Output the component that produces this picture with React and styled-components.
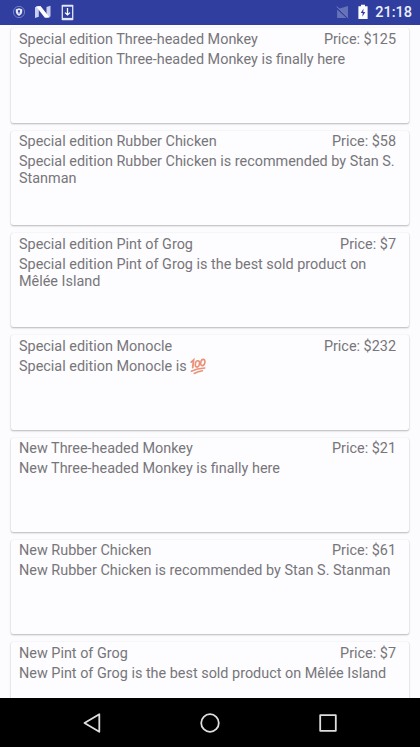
import React from "react";
import styled, { createGlobalStyle } from "styled-components";

const GlobalStyle = createGlobalStyle`
  body { margin: 0; background: #fcfbfe; }
  * { box-sizing: border-box; }
`;

const Screen = styled.main`
  display: flex;
  flex-direction: column;
  width: 420px;
  height: 747px;
  overflow: hidden;
  background: #fcfbfe;
  font-family: Roboto, sans-serif;
  color: #777679;
`;

const StatusBar = styled.header`
  display: flex;
  flex: none;
  align-items: center;
  justify-content: space-between;
  height: 24.5px;
  padding: 0 8px 0 12px;
  background: #303f9f;
`;

const StatusGroup = styled.div`
  display: flex;
  align-items: center;
  height: 24px;
`;

const StatusIcon = styled.svg`
  display: block;
  flex: none;
  margin-right: ${(p) => p.$gap}px;
`;

const Clock = styled.time`
  font-size: 14.5px;
  line-height: 24px;
  font-weight: 500;
  color: #eceefa;
  padding-top: 2px;
`;

const List = styled.section`
  display: flex;
  flex: 1;
  min-height: 0;
  flex-direction: column;
  gap: 7.93px;
  padding: 3.9px 11px 0;
  overflow: hidden;
`;

const Card = styled.article`
  flex: none;
  height: 94.4px;
  padding: 2.5px 13px 0 8px;
  border-radius: 2px;
  background: #fdfcff;
  box-shadow: 0 1px 2px rgba(0, 0, 0, 0.27), 0 0 1px rgba(0, 0, 0, 0.12);
`;

const CardHeader = styled.div`
  display: flex;
  justify-content: space-between;
  font-size: 14.42px;
  line-height: 17px;
`;

const Title = styled.span``;
const Price = styled.span``;

const Description = styled.p`
  margin: 3px 0 0;
  font-size: 14.42px;
  line-height: 17px;
`;

const HundredIcon = styled.svg`
  display: inline-block;
  vertical-align: top;
`;

const NavigationBar = styled.nav`
  display: grid;
  flex: none;
  grid-template-columns: repeat(3, 118px);
  justify-content: center;
  align-items: center;
  justify-items: center;
  height: 49px;
  background: #000;
`;

const NavIcon = styled.svg`
  display: block;
  fill: none;
  stroke: #dedede;
  stroke-width: 1.8;
  stroke-linejoin: round;
`;

const Hundred = () => (
  <HundredIcon width="17" height="17" viewBox="0 0 17 17" fill="none" stroke="#e99278" strokeLinecap="round" role="img" aria-label="100">
    <path d="M1.2 4.1 3.6 2 2.7 9.7" strokeWidth="1.8" />
    <ellipse cx="7.4" cy="5.9" rx="2" ry="3.2" transform="rotate(14 7.4 5.9)" strokeWidth="1.6" />
    <ellipse cx="12.8" cy="4.5" rx="2" ry="3.2" transform="rotate(14 12.8 4.5)" strokeWidth="1.6" />
    <path d="M1.3 13.2Q7 10.7 14.8 10.1M4.2 15.5Q8 13.5 12.5 12.8" strokeWidth="1.5" />
  </HundredIcon>
);

const products = [
  ["Special edition Three-headed Monkey", "$125", "Special edition Three-headed Monkey is finally here"],
  ["Special edition Rubber Chicken", "$58", "Special edition Rubber Chicken is recommended by Stan S. Stanman"],
  ["Special edition Pint of Grog", "$7", "Special edition Pint of Grog is the best sold product on Mêlée Island"],
  ["Special edition Monocle", "$232", <>Special edition Monocle is <Hundred /></>],
  ["New Three-headed Monkey", "$21", "New Three-headed Monkey is finally here"],
  ["New Rubber Chicken", "$61", "New Rubber Chicken is recommended by Stan S. Stanman"],
  ["New Pint of Grog", "$7", "New Pint of Grog is the best sold product on Mêlée Island"],
];

export default function App() {
  return (
    <Screen>
      <GlobalStyle />
      <StatusBar>
        <StatusGroup>
          <StatusIcon $gap={9} width="14" height="14" viewBox="0 0 14 14">
            <circle cx="7" cy="7" r="5.6" fill="none" stroke="#8490d0" strokeWidth="0.8" />
            <path d="M7 3.2 10.2 4.3V7Q10 9.7 7 11 4 9.7 3.8 7V4.3Z" fill="#e8eafa" />
            <circle cx="7" cy="6.2" r="1.15" fill="#303f9f" />
            <path d="M7 6.5V8.7" stroke="#303f9f" />
          </StatusIcon>
          <StatusIcon $gap={10} width="16" height="14" viewBox="0 0 16 14">
            <path d="M0 2.2 3.8 1v10.8L0 13Z" fill="#c9cff0" />
            <path d="M11.5 2 15.5 .8v10.7l-4 1.2Z" fill="#c9cff0" />
            <path d="M1 1.4 5.5 1.1l9.2 11.3-4.8.3Z" fill="#fff" />
          </StatusIcon>
          <StatusIcon $gap={0} width="13" height="17" viewBox="0 0 12 17" preserveAspectRatio="none">
            <rect x=".6" y=".7" width="10.8" height="15.6" rx=".7" fill="#e2e5f7" />
            <path d="M1.8 2.7h8.4v11.2H1.8Z" fill="#303f9f" />
            <path d="M6 4.1v6.8M3.7 8.7 6 11l2.3-2.3" fill="none" stroke="#fff" strokeWidth="1.2" />
          </StatusIcon>
        </StatusGroup>
        <StatusGroup>
          <StatusIcon $gap={9} width="13" height="14" viewBox="0 0 13 14">
            <path d="M12 1v11.5L2.8 3.8ZM1.1 4.4 10.5 13H1.1Z" fill="#6672b8" />
            <path d="m.7 1.5 11.6 11.3" stroke="#7883c1" strokeWidth="1" />
          </StatusIcon>
          <StatusIcon $gap={7} width="10" height="16" viewBox="0 0 10 16">
            <path d="M3 .8h4v1.4h2.6V15H.4V2.2H3Z" fill="#fff" />
            <path d="M5.6 4.5 2.7 9.1h2L4.3 12.7 7.3 8H5.2Z" fill="#303f9f" />
          </StatusIcon>
          <Clock>21:18</Clock>
        </StatusGroup>
      </StatusBar>
      <List>
        {products.map(([title, price, description]) => (
          <Card key={title}>
            <CardHeader>
              <Title>{title}</Title>
              <Price>Price: {price}</Price>
            </CardHeader>
            <Description>{description}</Description>
          </Card>
        ))}
      </List>
      <NavigationBar>
        <NavIcon width="20" height="22" viewBox="0 0 20 22">
          <path d="M17.3 2.2v17.6L2.5 11Z" />
        </NavIcon>
        <NavIcon width="22" height="22" viewBox="0 0 22 22">
          <circle cx="11" cy="11" r="8.8" />
        </NavIcon>
        <NavIcon width="18" height="18" viewBox="0 0 18 18">
          <rect x="1.2" y="1.2" width="15.6" height="15.6" />
        </NavIcon>
      </NavigationBar>
    </Screen>
  );
}
